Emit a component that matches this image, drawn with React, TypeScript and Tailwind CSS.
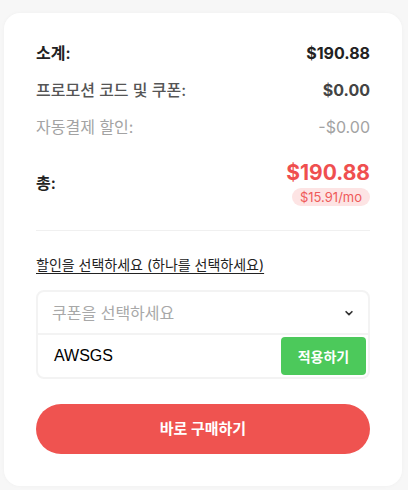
import React from 'react';

const rows = [
  { label: '소계:', value: '$190.88', cls: 'text-[#222] font-semibold', vcls: 'text-[#222] font-bold' },
  { label: '프로모션 코드 및 쿠폰:', value: '$0.00', cls: 'text-[#555] font-medium', vcls: 'text-[#444] font-bold' },
  { label: '자동결제 할인:', value: '-$0.00', cls: 'text-[#a3a3a3]', vcls: 'text-[#a3a3a3]' },
];

const App = () => {
  return (
    <div
      className="min-h-[490px] w-[408px] bg-[#f7f7f7] pt-[13px] pl-1 pr-[6px] pb-1"
      style={{ fontFamily: 'Inter, "Noto Sans CJK KR", sans-serif' }}
    >
      <div className="rounded-2xl bg-white px-8 pt-[29px] pb-[32px] shadow-[0_0_4px_rgba(0,0,0,0.03)]">
        <div className="flex flex-col gap-[15px]">
          {rows.map((r) => (
            <div key={r.label} className="flex h-[22px] items-center justify-between text-[16px]">
              <span className={r.cls}>{r.label}</span>
              <span className={r.vcls}>{r.value}</span>
            </div>
          ))}
        </div>

        <div className="mt-[22px] flex items-center justify-between">
          <span className="text-[16px] font-semibold text-[#222]">총:</span>
          <div className="flex flex-col items-end">
            <span className="text-[21px] font-bold leading-[26px] text-[#ef4f4f]">$190.88</span>
            <span className="mt-[2px] rounded-full bg-[#fde4e4] px-[8px] text-[13px] leading-[18px] text-[#ef5a5a]">
              $15.91/mo
            </span>
          </div>
        </div>

        <div className="mt-[24px] h-px bg-[#f0f0f0]" />

        <div className="mt-[23px] text-[14px] text-[#222] underline underline-offset-[3px]">
          할인을 선택하세요 (하나를 선택하세요)
        </div>

        <div className="mt-[15px] rounded-lg border-2 border-[#f3f3f3]">
          <div className="flex h-[43px] items-center justify-between border-b-2 border-[#f3f3f3] pl-[14px] pr-[14px]">
            <span className="text-[16px] text-[#a8a8a8]">쿠폰을 선택하세요</span>
            <svg width="10" height="10" viewBox="0 0 24 24" fill="none" stroke="#333" strokeWidth="4" strokeLinecap="round" strokeLinejoin="round">
              <path d="M5 9l7 7 7-7" />
            </svg>
          </div>
          <div className="flex h-[42px] items-center justify-between pl-[16px] pr-[2px]">
            <span className="text-[16px] text-black" style={{ fontFamily: '"Liberation Sans", Arial, sans-serif' }}>AWSGS</span>
            <button className="h-[38px] w-[85px] rounded-[4px] bg-[#4cc95b] text-[14px] font-semibold text-white">
              적용하기
            </button>
          </div>
        </div>

        <button className="mt-[25px] h-[50px] w-full rounded-full bg-[#ef5350] text-[15px] font-bold text-white">
          바로 구매하기
        </button>
      </div>
    </div>
  );
};

export default App;
